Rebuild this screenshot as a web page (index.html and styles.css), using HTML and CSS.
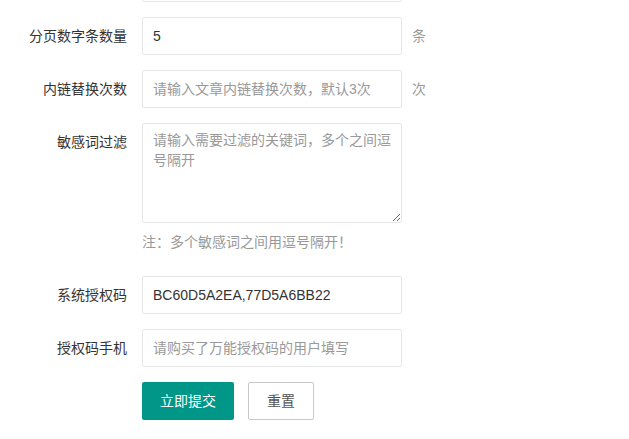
FILE: index.html
```html
<!DOCTYPE html>
<html lang="zh-CN">
<head>
  <meta charset="UTF-8">
  <meta name="viewport" content="width=device-width, initial-scale=1.0">
  <title>系统设置</title>
  <link rel="stylesheet" href="styles.css">
</head>
<body>
  <form class="form">
    <div class="form-item">
      <div class="form-label"></div>
      <div class="input-inline">
        <input type="text" class="input" value="">
      </div>
    </div>
    <div class="form-item">
      <label class="form-label">分页数字条数量</label>
      <div class="input-inline">
        <input type="text" class="input" value="5">
      </div>
      <div class="form-mid">条</div>
    </div>
    <div class="form-item">
      <label class="form-label">内链替换次数</label>
      <div class="input-inline">
        <input type="text" class="input" placeholder="请输入文章内链替换次数，默认3次">
      </div>
      <div class="form-mid">次</div>
    </div>
    <div class="form-item">
      <label class="form-label">敏感词过滤</label>
      <div class="input-inline">
        <textarea class="textarea" placeholder="请输入需要过滤的关键词，多个之间逗号隔开"></textarea>
        <div class="word-aux">注：多个敏感词之间用逗号隔开！</div>
      </div>
    </div>
    <div class="form-item">
      <label class="form-label">系统授权码</label>
      <div class="input-inline">
        <input type="text" class="input" value="BC60D5A2EA,77D5A6BB22">
      </div>
    </div>
    <div class="form-item">
      <label class="form-label">授权码手机</label>
      <div class="input-inline">
        <input type="text" class="input" placeholder="请购买了万能授权码的用户填写">
      </div>
    </div>
    <div class="form-item">
      <div class="form-label"></div>
      <div class="btn-group">
        <button type="button" class="btn">立即提交</button>
        <button type="reset" class="btn btn-primary">重置</button>
      </div>
    </div>
  </form>
</body>
</html>
```

FILE: styles.css
```css
body {
  margin: 0;
  background: #fff;
  color: #333;
  font-family: "Liberation Sans", "Noto Sans CJK SC", sans-serif;
  font-size: 14px;
}
.form {
  margin-top: -36px;
}
.form-item {
  display: flex;
  align-items: flex-start;
  margin-bottom: 15px;
}
.form-label {
  width: 112px;
  padding: 9px 15px 9px 15px;
  min-height: 20px;
  line-height: 20px;
  text-align: right;
  color: #333;
  flex-shrink: 0;
}
.input-inline {
  width: 260px;
}
.input,
.textarea {
  display: block;
  box-sizing: border-box;
  width: 100%;
  height: 38px;
  padding: 0 10px;
  border: 1px solid #e6e6e6;
  border-radius: 2px;
  background: #fff;
  color: #333;
  font-family: inherit;
  font-size: 14px;
  line-height: 1.3;
  outline: none;
}
.textarea {
  height: 100px;
  min-height: 100px;
  padding: 6px 10px;
  line-height: 20px;
  resize: vertical;
}
.input::placeholder,
.textarea::placeholder {
  color: #999;
}
.form-mid {
  margin-left: 10px;
  padding: 9px 0;
  line-height: 20px;
  color: #999;
}
.word-aux {
  padding: 9px 0;
  line-height: 20px;
  color: #999;
}
.btn-group {
  display: flex;
  gap: 14px;
}
.btn {
  box-sizing: border-box;
  height: 38px;
  padding: 0 18px;
  border: none;
  border-radius: 2px;
  background: #009688;
  color: #fff;
  font-family: inherit;
  font-size: 14px;
  line-height: 38px;
  cursor: pointer;
}
.btn-primary {
  border: 1px solid #c9c9c9;
  background: #fff;
  color: #555;
  line-height: 36px;
}
```
